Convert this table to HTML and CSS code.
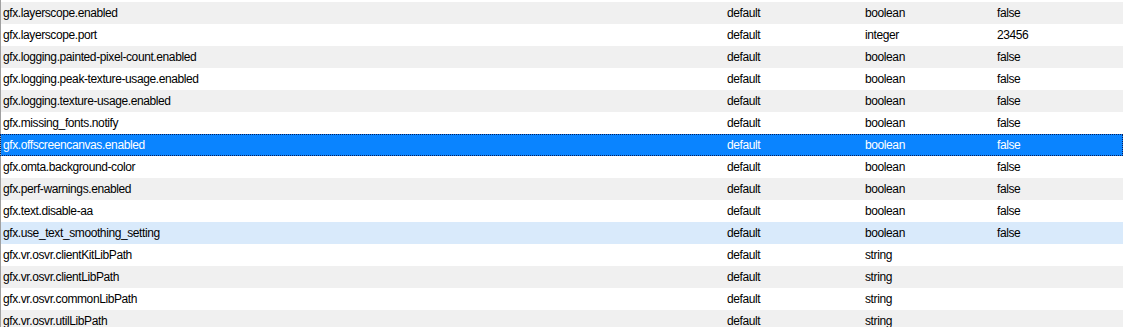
FILE: index.html
```html
<!DOCTYPE html>
<html>
<head>
<meta charset="utf-8">
<link rel="stylesheet" href="styles.css">
</head>
<body>
<div class="list">
  <div class="row odd"><span class="c name">gfx.layerscope.enabled</span><span class="c status">default</span><span class="c type">boolean</span><span class="c value">false</span></div>
  <div class="row"><span class="c name">gfx.layerscope.port</span><span class="c status">default</span><span class="c type">integer</span><span class="c value">23456</span></div>
  <div class="row odd"><span class="c name">gfx.logging.painted-pixel-count.enabled</span><span class="c status">default</span><span class="c type">boolean</span><span class="c value">false</span></div>
  <div class="row"><span class="c name">gfx.logging.peak-texture-usage.enabled</span><span class="c status">default</span><span class="c type">boolean</span><span class="c value">false</span></div>
  <div class="row odd"><span class="c name">gfx.logging.texture-usage.enabled</span><span class="c status">default</span><span class="c type">boolean</span><span class="c value">false</span></div>
  <div class="row"><span class="c name">gfx.missing_fonts.notify</span><span class="c status">default</span><span class="c type">boolean</span><span class="c value">false</span></div>
  <div class="row selected"><span class="c name">gfx.offscreencanvas.enabled</span><span class="c status">default</span><span class="c type">boolean</span><span class="c value">false</span></div>
  <div class="row"><span class="c name">gfx.omta.background-color</span><span class="c status">default</span><span class="c type">boolean</span><span class="c value">false</span></div>
  <div class="row odd"><span class="c name">gfx.perf-warnings.enabled</span><span class="c status">default</span><span class="c type">boolean</span><span class="c value">false</span></div>
  <div class="row"><span class="c name">gfx.text.disable-aa</span><span class="c status">default</span><span class="c type">boolean</span><span class="c value">false</span></div>
  <div class="row hover"><span class="c name">gfx.use_text_smoothing_setting</span><span class="c status">default</span><span class="c type">boolean</span><span class="c value">false</span></div>
  <div class="row"><span class="c name">gfx.vr.osvr.clientKitLibPath</span><span class="c status">default</span><span class="c type">string</span><span class="c value"></span></div>
  <div class="row odd"><span class="c name">gfx.vr.osvr.clientLibPath</span><span class="c status">default</span><span class="c type">string</span><span class="c value"></span></div>
  <div class="row"><span class="c name">gfx.vr.osvr.commonLibPath</span><span class="c status">default</span><span class="c type">string</span><span class="c value"></span></div>
  <div class="row odd"><span class="c name">gfx.vr.osvr.utilLibPath</span><span class="c status">default</span><span class="c type">string</span><span class="c value"></span></div>
</div>
</body>
</html>
```
FILE: styles.css
```css
html, body {
  margin: 0;
  padding: 0;
  background: #ffffff;
  overflow: hidden;
}
body {
  font-family: "Liberation Sans", Arial, sans-serif;
  font-size: 12px;
  letter-spacing: -0.4px;
  color: #000000;
}
.list {
  padding-top: 2px;
  border-left: 1px solid #a0a0a0;
  min-height: 340px;
}
.row {
  display: grid;
  grid-template-columns: 723px 138px 132px 1fr;
  height: 22px;
  background: #ffffff;
  white-space: nowrap;
}
.row.odd {
  background: #f0f0f0;
}
.row.hover {
  background: #d9eafb;
}
.row.selected {
  background: #0a84ff;
  color: #ffffff;
  position: relative;
}
.row.selected::after {
  content: "";
  position: absolute;
  left: -1px;
  right: 0;
  top: 0;
  bottom: 0;
  border: 1px dotted #0a1f5c;
  pointer-events: none;
}
.c {
  padding-left: 2px;
  padding-top: 1px;
  line-height: 21px;
  overflow: hidden;
}
.status, .type, .value {
  padding-left: 3px;
}
```
